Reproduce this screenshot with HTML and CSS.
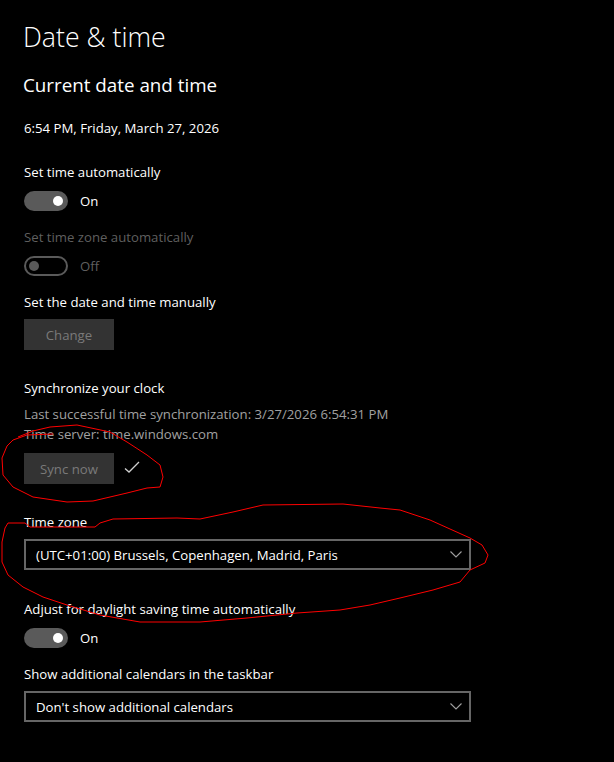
FILE: index.html
```html
<!DOCTYPE html>
<html>
	<head>
		<meta charset="utf-8">
		<title>Date &amp; time</title>
		<link rel="stylesheet" href="styles.css">
	</head>
	<body>
		<div class="page">
			<h1 class="title">Date &amp; time</h1>
			<h2 class="subtitle">Current date and time</h2>
			<p class="now">6:54 PM, Friday, March 27, 2026</p>

			<!-- 自动设置时间 -->
			<div class="group first">
				<p class="label">Set time automatically</p>
				<div class="toggle-row">
					<span class="toggle on"><span class="knob"></span></span>
					<span class="state">On</span>
				</div>
			</div>

			<div class="group">
				<p class="label disabled">Set time zone automatically</p>
				<div class="toggle-row">
					<span class="toggle off"><span class="knob"></span></span>
					<span class="state disabled">Off</span>
				</div>
			</div>

			<div class="group">
				<p class="label">Set the date and time manually</p>
				<div class="btn-row">
					<span class="btn">Change</span>
				</div>
			</div>

			<!-- 同步 -->
			<div class="group wide">
				<p class="label">Synchronize your clock</p>
				<div class="info">
					<p>Last successful time synchronization: 3/27/2026 6:54:31 PM</p>
					<p>Time server: time.windows.com</p>
				</div>
				<div class="btn-row sync">
					<span class="btn">Sync now</span>
					<svg class="check" width="16" height="12" viewBox="0 0 16 12">
						<polyline points="1,7.5 5,11 15,1" fill="none" stroke="#d0d0d0" stroke-width="1.3" />
					</svg>
				</div>
			</div>

			<!-- 时区 -->
			<div class="group wide">
				<p class="label">Time zone</p>
				<div class="select">
					<span>(UTC+01:00) Brussels, Copenhagen, Madrid, Paris</span>
					<svg class="chevron" width="12" height="7" viewBox="0 0 12 7">
						<polyline points="0.5,0.5 6,6 11.5,0.5" fill="none" stroke="#a0a0a0" stroke-width="1.1" />
					</svg>
				</div>
			</div>

			<div class="group dst">
				<p class="label">Adjust for daylight saving time automatically</p>
				<div class="toggle-row">
					<span class="toggle on"><span class="knob"></span></span>
					<span class="state">On</span>
				</div>
			</div>

			<div class="group">
				<p class="label">Show additional calendars in the taskbar</p>
				<div class="select">
					<span>Don't show additional calendars</span>
					<svg class="chevron" width="12" height="7" viewBox="0 0 12 7">
						<polyline points="0.5,0.5 6,6 11.5,0.5" fill="none" stroke="#a0a0a0" stroke-width="1.1" />
					</svg>
				</div>
			</div>

			<!-- 红色手绘圈 -->
			<svg class="marks" width="614" height="762" viewBox="0 0 614 762">
				<polyline fill="none" stroke="#f00" stroke-width="1" stroke-linejoin="round"
					points="53,434 27,435 13,440 7,446 2,458 3,475 13,487 33,497 67,502 93,501 127,493 147,488 160,487 163,477 160,465 147,455 127,442 110,432 77,425 50,427 33,431 18,437" />
				<polyline fill="none" stroke="#f00" stroke-width="1" stroke-linejoin="round"
					points="25,523 30,527 95,527 100,523 113,519 177,518 200,519 233,512 263,505 343,504 380,508 400,510 430,520 470,538 482,545 488,555 485,563 470,570 460,582 433,590 400,598 370,605 340,610 297,613 247,618 200,622 177,622 140,622 100,615 67,605 43,597 23,587 8,575 2,562 2,542 5,528 8,523 25,523" />
			</svg>
		</div>
	</body>
</html>
```

FILE: styles.css
```css
* {
	margin: 0;
	padding: 0;
}

body {
	background-color: #000;
	color: #fff;
	font-family: "Open Sans", "Noto Sans", sans-serif;
	font-size: 13.2px;
	line-height: 20px;
}

.page {
	position: relative;
	width: 614px;
	height: 762px;
	padding: 19px 0 0 24px;
	box-sizing: border-box;
	overflow: hidden;
}

.title {
	margin-left: -1px;
	font-size: 26.7px;
	font-weight: 300;
	line-height: 36px;
}

.subtitle {
	margin: 16px 0 0 -1px;
	font-size: 18.8px;
	font-weight: 400;
	line-height: 28px;
}

.now {
	margin-top: 18.5px;
}

.group {
	margin-top: 15.5px;
}

.group.first {
	margin-top: 24px;
}

.group.wide {
	margin-top: 27.5px;
}

.group.dst {
	margin-top: 28.5px;
}

.disabled {
	color: #5f5f5f;
}

/* 开关 */
.toggle-row {
	display: flex;
	align-items: center;
	gap: 12px;
	margin-top: 9.5px;
	height: 20px;
}

.toggle {
	position: relative;
	width: 44px;
	height: 20px;
	border-radius: 10px;
	box-sizing: border-box;
}

.toggle .knob {
	position: absolute;
	top: 5px;
	width: 10px;
	height: 10px;
	border-radius: 50%;
}

.toggle.on {
	background-color: #5a5a5a;
}

.toggle.on .knob {
	right: 5px;
	background-color: #fff;
}

.toggle.off {
	border: 2px solid #5a5a5a;
}

.toggle.off .knob {
	top: 3px;
	left: 3px;
	background-color: #5a5a5a;
}

/* 按钮 */
.btn-row {
	display: flex;
	align-items: center;
	margin-top: 7.5px;
}

.btn-row.sync {
	margin-top: 9.5px;
}

.btn {
	display: flex;
	align-items: center;
	justify-content: center;
	width: 90px;
	height: 31px;
	background-color: #333;
	color: #7a7a7a;
}

.check {
	margin: -3px 0 0 10px;
}

.info {
	margin-top: 6px;
	color: #a0a0a0;
}

/* 下拉框 */
.select {
	display: flex;
	align-items: center;
	justify-content: space-between;
	margin-top: 7.5px;
	width: 447px;
	height: 31px;
	padding: 0 7px 0 10px;
	border: 2px solid #666;
	box-sizing: border-box;
}

.chevron {
	margin-top: -1px;
}

.marks {
	position: absolute;
	left: 0;
	top: 0;
	pointer-events: none;
}
```
